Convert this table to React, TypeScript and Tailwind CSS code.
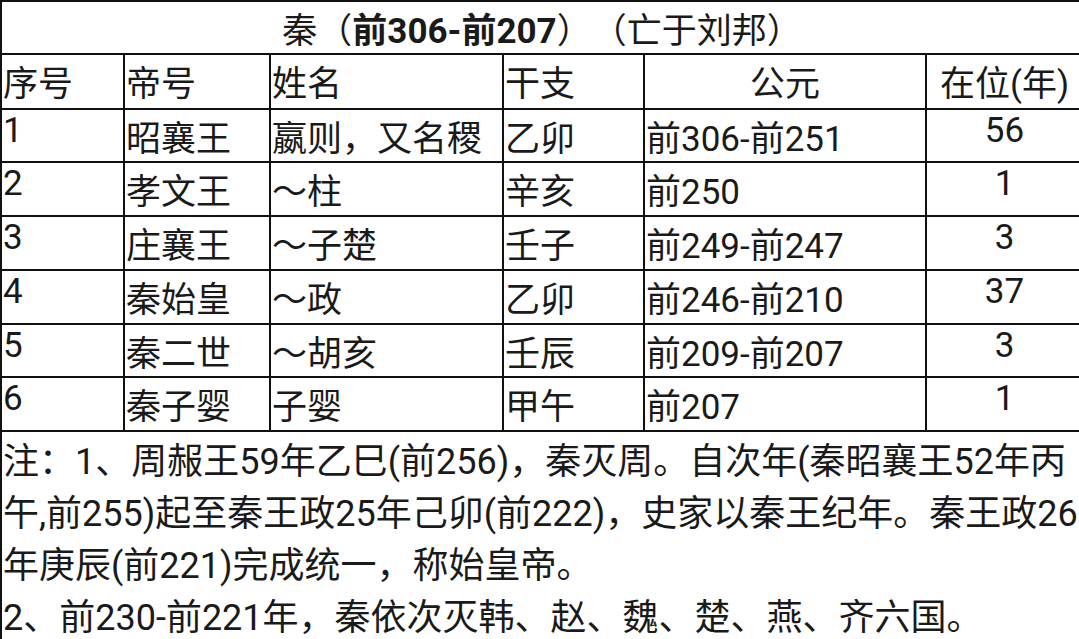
import React from "react";

const rows = [
  ["1", "昭襄王", "嬴则，又名稷", "乙卯", "前306-前251", "56"],
  ["2", "孝文王", "～柱", "辛亥", "前250", "1"],
  ["3", "庄襄王", "～子楚", "壬子", "前249-前247", "3"],
  ["4", "秦始皇", "～政", "乙卯", "前246-前210", "37"],
  ["5", "秦二世", "～胡亥", "壬辰", "前209-前207", "3"],
  ["6", "秦子婴", "子婴", "甲午", "前207", "1"],
];

const rowHeights = ["h-[53px]", "h-[54px]", "h-[54px]", "h-[54px]", "h-[53px]", "h-[54px]"];

const cell = "border-2 border-[#111] align-top px-[1px] py-0 leading-[normal] overflow-hidden whitespace-nowrap";

export default function App() {
  return (
    <div className="w-[1079px] h-[639px] overflow-hidden bg-white text-[#1a1a1a] [text-spacing-trim:space-all] font-['Roboto','Noto_Sans_CJK_SC',sans-serif]">
      <table className="table-fixed border-collapse w-[1082px] text-[35px] border-b-[3px] border-[#111]">
        <colgroup>
          <col className="w-[123px]" />
          <col className="w-[146px]" />
          <col className="w-[233px]" />
          <col className="w-[141px]" />
          <col className="w-[282px]" />
          <col className="w-[157px]" />
        </colgroup>
        <tbody>
          <tr className="h-[52px]">
            <td colSpan={6} className={`${cell} text-center`}>
              秦（<span className="font-bold">前306-前207</span>）（亡于刘邦）
            </td>
          </tr>
          <tr className="h-[55px]">
            <td className={cell}>序号</td>
            <td className={cell}>帝号</td>
            <td className={cell}>姓名</td>
            <td className={cell}>干支</td>
            <td className={`${cell} text-center`}>公元</td>
            <td className={`${cell} text-center`}>在位(年)</td>
          </tr>
          {rows.map((r, i) => (
            <tr key={i} className={rowHeights[i]}>
              <td className={cell}>{r[0]}</td>
              <td className={cell}>{r[1]}</td>
              <td className={cell}>{r[2]}</td>
              <td className={cell}>{r[3]}</td>
              <td className={cell}>{r[4]}</td>
              <td className={`${cell} text-center`}>{r[5]}</td>
            </tr>
          ))}
          <tr className="h-[208px]">
            <td colSpan={6} className={`${cell} text-[36px] border-b-[3px]`}>
              <div>注：1、周赧王59年乙巳(前256)，秦灭周。自次年(秦昭襄王52年丙</div>
              <div>午,前255)起至秦王政25年己卯(前222)，史家以秦王纪年。秦王政26</div>
              <div>年庚辰(前221)完成统一，称始皇帝。</div>
              <div>2、前230-前221年，秦依次灭韩、赵、魏、楚、燕、齐六国。</div>
            </td>
          </tr>
        </tbody>
      </table>
    </div>
  );
}
